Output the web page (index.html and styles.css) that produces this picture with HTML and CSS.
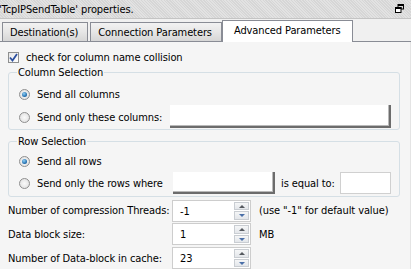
FILE: index.html
```html
<!DOCTYPE html>
<html lang="en">
<head>
    <meta charset="UTF-8">
    <title>'TcpIPSendTable' properties.</title>
    <link rel="stylesheet" href="styles.css">
</head>
<body>

<div class="window">
    <!-- title bar -->
    <div class="titlebar">
        <span class="title">'TcpIPSendTable' properties.</span>
        <svg class="restore" width="9" height="9" viewBox="0 0 9 9">
            <rect x="3" y="0.5" width="5.5" height="4.5" fill="none" stroke="#000"/>
            <rect x="3" y="0" width="6" height="2" fill="#000"/>
            <rect x="0.5" y="3.5" width="5.5" height="5" fill="#fff" stroke="#000"/>
            <rect x="0" y="3" width="6.5" height="2" fill="#000"/>
        </svg>
    </div>

    <!-- tabs -->
    <div class="tabs">
        <div class="tab">Destination(s)</div>
        <div class="tab">Connection Parameters</div>
        <div class="tab active">Advanced Parameters</div>
    </div>

    <div class="panel">
        <label class="check-row">
            <span class="checkbox"><svg width="9" height="9" viewBox="0 0 9 9"><path d="M1 4.5 L3.5 7.5 L8 1" fill="none" stroke="#2c4f9e" stroke-width="1.8"/></svg></span>
            check for column name collision
        </label>

        <fieldset class="group columns">
            <legend>Column Selection</legend>
            <div class="radio-row">
                <span class="radio checked"></span>Send all columns
            </div>
            <div class="radio-row">
                <span class="radio"></span><span class="radio-label cols-label">Send only these columns:</span>
                <span class="field sunk columns-field"></span>
            </div>
        </fieldset>

        <fieldset class="group rows">
            <legend>Row Selection</legend>
            <div class="radio-row">
                <span class="radio checked"></span>Send all rows
            </div>
            <div class="radio-row">
                <span class="radio"></span><span class="radio-label rows-label">Send only the rows where</span>
                <span class="field sunk where-field"></span>
                <span class="equal-label">is equal to:</span>
                <span class="field plain equal-field"></span>
            </div>
        </fieldset>

        <div class="params">
            <div class="param-row">
                <span class="param-label">Number of compression Threads:</span>
                <span class="spinner"><span class="spin-value">-1</span><span class="spin-btns"><span class="up"></span><span class="down"></span></span></span>
                <span class="param-note">(use "-1" for default value)</span>
            </div>
            <div class="param-row">
                <span class="param-label">Data block size:</span>
                <span class="spinner"><span class="spin-value">1</span><span class="spin-btns"><span class="up"></span><span class="down"></span></span></span>
                <span class="param-note">MB</span>
            </div>
            <div class="param-row">
                <span class="param-label">Number of Data-block in cache:</span>
                <span class="spinner"><span class="spin-value">23</span><span class="spin-btns"><span class="up"></span><span class="down"></span></span></span>
            </div>
        </div>
    </div>
</div>

</body>
</html>
```

FILE: styles.css
```css
body {
    margin: 0;
    font-family: "DejaVu Sans Condensed", "DejaVu Sans", sans-serif;
    font-size: 11px;
    letter-spacing: -0.1px;
    color: #000;
    background-color: #f0f0f0;
    white-space: nowrap;
}
.window {
    width: 411px;
    height: 269px;
    overflow: hidden;
    display: flex;
    flex-direction: column;
}
.titlebar {
    height: 18px;
    flex-shrink: 0;
    display: flex;
    align-items: center;
    justify-content: space-between;
    padding: 0 7px 0 0;
    background-color: #dcdcdc;
    background-image: repeating-linear-gradient(45deg, #d6d6d6 0 1px, #e2e2e2 1px 2px);
    border-bottom: 1px solid #c4c4c4;
}
.title {
    margin-left: -1px;
}
.restore {
    margin-top: -1px;
}
.tabs {
    display: flex;
    flex-shrink: 0;
    align-items: flex-end;
    height: 22px;
    padding-left: 2px;
    border-bottom: 1px solid #898c95;
    background-color: #f0f0f0;
}
.tab {
    height: 18px;
    line-height: 19px;
    padding: 0 9px 0 7px;
    margin-right: 2px;
    border: 1px solid #898c95;
    border-bottom: none;
    background: linear-gradient(#f2f2f2, #e6e6e6 50%, #d6d6d6);
}
.tab.active {
    height: 21px;
    line-height: 19px;
    margin-bottom: -1px;
    margin-left: -2px;
    padding: 0 11px 0 11px;
    background: #fff;
}
.panel {
    flex: 1;
    background-color: #f5f5f5;
    padding: 0 10px 0 8px;
    border-right: 1px solid #e4e4e4;
}
.check-row {
    display: flex;
    align-items: center;
    height: 14px;
    margin-top: 8px;
}
.checkbox {
    width: 11px;
    height: 11px;
    box-sizing: border-box;
    border: 1px solid #8e8f8f;
    background: linear-gradient(135deg, #e6e6e6, #fff);
    display: flex;
    align-items: center;
    justify-content: center;
    margin-right: 7px;
}
.group {
    margin: 2px 0 0 0;
    padding: 4px 0 0 10px;
    border: 1px solid #d5dfe5;
    border-radius: 3px;
}
.group.rows {
    margin-top: 5px;
    padding: 2px 0 2px 10px;
}
legend {
    padding: 0 1px;
    margin-left: -2px;
    line-height: 13px;
}
.radio-row {
    display: flex;
    align-items: center;
    height: 22px;
}
.columns .radio-row:last-child {
    height: 24px;
}
.radio {
    width: 11px;
    height: 11px;
    box-sizing: border-box;
    border-radius: 50%;
    border: 1px solid #8f8f8f;
    background: radial-gradient(circle, #fafafa, #dcdcdc);
    margin-right: 7px;
    position: relative;
}
.radio.checked::after {
    content: "";
    position: absolute;
    left: 2px;
    top: 2px;
    width: 5px;
    height: 5px;
    border-radius: 50%;
    background: radial-gradient(circle at 40% 35%, #8fd0f5, #1a66a8 70%, #0f3f70);
}
.cols-label {
    width: 133px;
}
.rows-label {
    width: 136px;
}
.field {
    display: block;
    box-sizing: border-box;
    background: #fff;
}
.sunk {
    border-right: 2px solid #6c6c6c;
    border-bottom: 2px solid #6c6c6c;
    box-shadow: inset -1px -1px 0 #b9b9b9;
}
.columns-field {
    width: 221px;
    height: 23px;
    margin-top: -2px;
}
.where-field {
    width: 102px;
    height: 22px;
}
.equal-label {
    margin-left: 6px;
    width: 59px;
}
.plain {
    height: 22px;
    border: 1px solid #d0d0d0;
}
.equal-field {
    width: 51px;
}
.params {
    margin-top: 2px;
}
.param-row {
    display: flex;
    align-items: center;
    height: 23px;
}
.param-row + .param-row {
    height: 24px;
}
.param-label {
    width: 164px;
}
.spinner {
    display: flex;
    width: 79px;
    height: 22px;
    box-sizing: border-box;
    border: 1px solid #cdcdcd;
    background: #fff;
}
.spin-value {
    flex: 1;
    padding: 4px 0 0 7px;
}
.spin-btns {
    width: 15px;
    display: flex;
    flex-direction: column;
    padding: 1px 1px 1px 0;
    gap: 1px;
}
.spin-btns span {
    flex: 1;
    border: 1px solid #c9cdd2;
    background: linear-gradient(#f5f6f7, #e3e6ea);
    position: relative;
}
.spin-btns .up::after,
.spin-btns .down::after {
    content: "";
    position: absolute;
    left: 4px;
    border-left: 3px solid transparent;
    border-right: 3px solid transparent;
}
.spin-btns .up::after {
    top: 2px;
    border-bottom: 3px solid #55595f;
}
.spin-btns .down::after {
    top: 2px;
    border-top: 3px solid #4a6fa8;
}
.param-note {
    margin-left: 8px;
}
```
